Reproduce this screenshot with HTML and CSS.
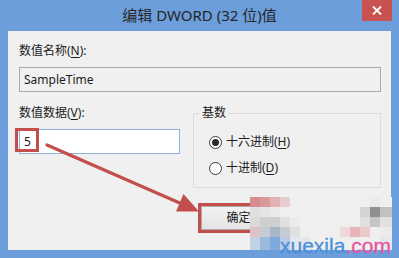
FILE: index.html
```html
<!DOCTYPE html>
<html lang="zh-CN">
<head>
<meta charset="utf-8">
<title>编辑 DWORD (32 位)值</title>
<link rel="stylesheet" href="styles.css">
</head>
<body>
<div class="window">
  <div class="titlebar">
    <span class="title">编辑 DWORD (32 位)值</span>
    <button class="close" aria-label="关闭">
      <svg width="10" height="9" viewBox="0 0 10 9"><path d="M1 0.5 L9 8.5 M9 0.5 L1 8.5" stroke="#fff" stroke-width="1.8" fill="none"/></svg>
    </button>
  </div>
  <div class="client">
    <div class="label">数值名称(<u>N</u>):</div>
    <div class="field readonly">SampleTime</div>
    <div class="row">
      <div class="col-left">
        <div class="label">数值数据(<u>V</u>):</div>
        <div class="field active">5</div>
      </div>
      <fieldset class="base">
        <legend>基数</legend>
        <label class="radio"><span class="dot checked"></span><span>十六进制(<u>H</u>)</span></label>
        <label class="radio"><span class="dot"></span><span>十进制(<u>D</u>)</span></label>
      </fieldset>
    </div>
    <div class="buttons">
      <button class="btn">确定</button>
      <button class="btn">取消</button>
    </div>
  </div>

  <div class="annot box-five"></div>
  <div class="annot box-ok"></div>
  <svg class="arrow" width="399" height="258" viewBox="0 0 399 258">
    <line x1="47" y1="145" x2="182" y2="204" stroke="#c24f4c" stroke-width="3.2" stroke-linecap="round"/>
    <polygon points="199,211.5 176,211.5 183.5,194" fill="#c24f4c"/>
  </svg>

  <div class="mosaic">
    <span class="a1"></span><span class="a2"></span><span class="a3"></span><span class="a4"></span><span></span><span></span><span></span><span></span><span></span><span></span><span></span><span></span><span class="g1"></span><span></span>
    <span class="b1"></span><span class="b2"></span><span class="b3"></span><span></span><span></span><span></span><span></span><span></span><span></span><span></span><span></span><span class="b4"></span><span class="b5"></span><span class="b6"></span>
    <span class="c1"></span><span class="c2"></span><span class="c2"></span><span class="c3"></span><span class="g1"></span><span></span><span></span><span></span><span></span><span></span><span></span><span class="c3"></span><span class="c4"></span><span class="c3"></span>
    <span class="d1"></span><span class="d2"></span><span class="d3"></span><span class="d2"></span><span class="c3"></span><span></span><span></span><span></span><span></span><span class="d4"></span><span class="d5"></span><span class="d6"></span><span></span><span class="g1"></span>
    <span class="e1"></span><span class="e2"></span><span class="e3"></span><span class="e4"></span><span class="e5"></span><span class="e5"></span><span></span><span></span><span></span><span></span><span></span><span></span><span></span><span class="e5"></span>
  </div>
  <div class="watermark"><span class="wm-blue">xuexila</span><span class="wm-pink">.com</span></div>
</div>
</body>
</html>
```

FILE: styles.css
```css
* { box-sizing: border-box; }

html, body {
  margin: 0;
  padding: 0;
}

body {
  width: 399px;
  height: 258px;
  overflow: hidden;
  font-family: "Noto Sans", "Noto Sans CJK SC", sans-serif;
  font-size: 12px;
  color: #1c1c1c;
}

.window {
  position: relative;
  width: 399px;
  height: 258px;
  background: #6b9edb;
  display: flex;
  flex-direction: column;
}

.titlebar {
  height: 31px;
  flex: none;
  display: grid;
  grid-template-columns: 1fr auto 1fr;
}

.title {
  grid-column: 2;
  font-size: 15px;
  line-height: 30px;
  color: #262626;
  white-space: nowrap;
}

.close {
  grid-column: 3;
  justify-self: end;
  align-self: start;
  width: 30px;
  height: 21px;
  margin-right: 7px;
  padding: 0;
  border: 0;
  background: #c85250;
  display: flex;
  align-items: center;
  justify-content: center;
}

.client {
  flex: 1;
  margin: 0 8px 8px;
  background: #f0f0f0;
  padding: 12px 10px 0 11px;
}

.label {
  height: 16px;
  line-height: 16px;
  white-space: nowrap;
}

u {
  text-decoration: underline;
  text-underline-offset: 2px;
  text-decoration-thickness: 1px;
}

.field {
  height: 25px;
  margin-top: 8px;
  border: 1px solid #a9a9a9;
  padding: 0 4px;
  line-height: 23px;
  white-space: nowrap;
}

.field.readonly {
  background: #f0f0f0;
}

.field.active {
  background: #fff;
  border-color: #8db2dc;
}

.row {
  display: flex;
  gap: 13px;
  margin-top: 13px;
}

.col-left {
  width: 161px;
  flex: none;
}

.base {
  width: 188px;
  height: 83px;
  flex: none;
  margin: 0;
  min-width: 0;
  padding: 0 0 0 15px;
  border: 1px solid #dcdcdc;
}

.base legend {
  margin-left: -9px;
  padding: 0 2px;
  line-height: 16px;
  font-size: 12px;
}

.radio {
  display: flex;
  align-items: center;
  gap: 4px;
  height: 16px;
  line-height: 16px;
  white-space: nowrap;
}

.radio:first-of-type {
  margin-top: 13px;
}

.radio + .radio {
  margin-top: 10px;
}

.dot {
  width: 13px;
  height: 13px;
  flex: none;
  border: 1px solid #3a3a3a;
  border-radius: 50%;
  background: #fff;
  display: flex;
  align-items: center;
  justify-content: center;
}

.dot.checked::after {
  content: "";
  width: 7px;
  height: 7px;
  border-radius: 50%;
  background: #2a2a2a;
}

.buttons {
  display: flex;
  justify-content: flex-end;
  gap: 10px;
  margin-top: 18px;
  padding-right: 20px;
}

.btn {
  width: 75px;
  height: 24px;
  padding: 0;
  border: 1px solid #acacac;
  background: linear-gradient(#f2f2f2, #e4e4e4);
  font-family: inherit;
  font-size: 12px;
  color: #1c1c1c;
  line-height: 22px;
}

/* annotations drawn over the dialog */
.annot {
  position: absolute;
  border: 3px solid #c24f4c;
}

.box-five {
  left: 15px;
  top: 128px;
  width: 24px;
  height: 24px;
}

.box-ok {
  left: 198px;
  top: 203px;
  width: 78px;
  height: 30px;
}

.arrow {
  position: absolute;
  left: 0;
  top: 0;
  pointer-events: none;
}

/* pixelated blur over the right-hand part */
.mosaic {
  position: absolute;
  left: 250px;
  top: 197px;
  display: grid;
  grid-template-columns: repeat(13, 10px) 12px;
  grid-template-rows: 10px 10px 10px 10px 13px;
}

.mosaic span { background: #efefef; }
.mosaic .g1 { background: #ebebeb; }
.mosaic .a1 { background: #d58c8c; }
.mosaic .a2 { background: #d99a9c; }
.mosaic .a3 { background: #e0b2b4; }
.mosaic .a4 { background: #e9cdce; }
.mosaic .b1 { background: #e0e0e0; }
.mosaic .b2 { background: #e5e5e5; }
.mosaic .b3 { background: #eaeaea; }
.mosaic .b4 { background: #d3d3d3; }
.mosaic .b5 { background: #8f8f8f; }
.mosaic .b6 { background: #c1c1c1; }
.mosaic .c1 { background: #dadada; }
.mosaic .c2 { background: #cfcfcf; }
.mosaic .c3 { background: #e0e0e0; }
.mosaic .c4 { background: #c5c5c5; }
.mosaic .d1 { background: #dfc3c4; }
.mosaic .d2 { background: #c5ccd5; }
.mosaic .d3 { background: #a9b6c5; }
.mosaic .d4 { background: #ecdadb; }
.mosaic .d5 { background: #e6b4b9; }
.mosaic .d6 { background: #eec9cc; }
.mosaic .e1 { background: #c2d2e5; }
.mosaic .e2 { background: #9cbade; }
.mosaic .e3 { background: #80a9dc; }
.mosaic .e4 { background: #b9cce4; }
.mosaic .e5 { background: #e4e8ee; }

.watermark {
  position: absolute;
  left: 280px;
  top: 235px;
  font-family: "Liberation Sans", Arial, sans-serif;
  font-size: 21px;
  line-height: 21px;
  white-space: nowrap;
  -webkit-text-stroke: 0.3px currentColor;
}

.wm-blue { color: #4b8fdb; }
.wm-pink { color: #e9559f; }
```
